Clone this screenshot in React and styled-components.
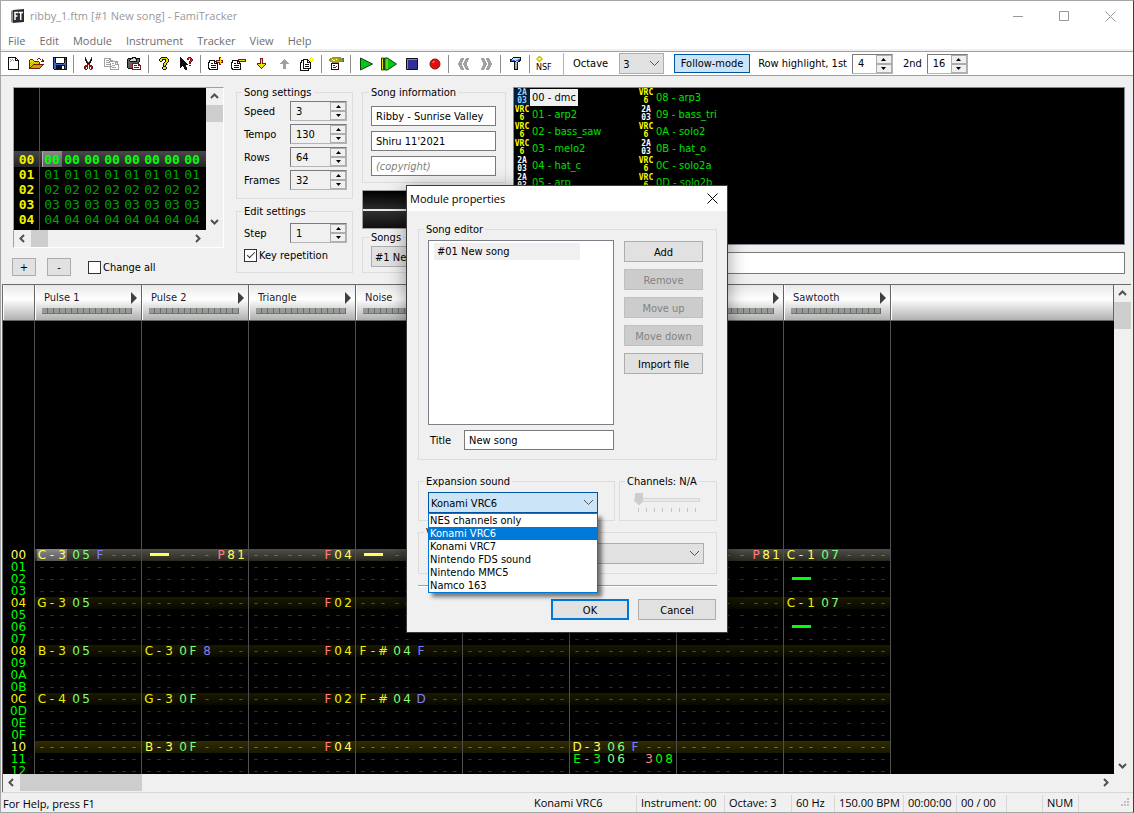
import React from "react";
import styled, { createGlobalStyle } from "styled-components";

const UI_FONT = `"DejaVu Sans Condensed", "DejaVu Sans", sans-serif`;
const SYS_FONT = `"Open Sans", "Noto Sans", sans-serif`;

const GlobalStyle = createGlobalStyle`
  *, *::before, *::after { box-sizing: border-box; }
  body {
    margin: 0;
    overflow: hidden;
    background: #f0f0f0;
  }
  button, input, select {
    font: inherit;
    color: inherit;
    margin: 0;
    padding: 0;
    border-radius: 0;
  }
`;

const Window = styled.div`
  position: relative;
  display: flex;
  flex-direction: column;
  height: 100vh;
  background: #f0f0f0;
  border: 1px solid #a6a6a6;
  border-right-color: #3c3c48;
  font: 11px/13px ${UI_FONT};
  color: #000;
  white-space: nowrap;
`;

/* ---------- title and menu ---------- */

const TitleBar = styled.header`
  display: flex;
  align-items: center;
  height: 30px;
  padding: 0 11px 0 9px;
  background: #fff;
  font: 11px/16px ${SYS_FONT};
  color: #999;
  flex: none;
`;

const TitleText = styled.h1`
  margin: 0 auto 0 4px;
  font: inherit;
`;

const CaptionButton = styled.button`
  width: 46px;
  height: 28px;
  border: 0;
  background: none;
  display: flex;
  align-items: center;
  justify-content: center;

  &:last-child { width: 24px; margin-left: 11px; }
`;

const MenuBar = styled.nav`
  display: flex;
  gap: 14px;
  height: 20px;
  padding: 1px 7px 0;
  background: #fff;
  border-bottom: 2px solid #f0f0f0;
  font: 11px/17px ${SYS_FONT};
  flex: none;
`;

const MenuItem = styled.button`
  border: 0;
  background: none;
  color: #6d6d6d;
`;

/* ---------- toolbar ---------- */

const ToolBar = styled.div`
  display: flex;
  align-items: center;
  height: 25px;
  padding-left: 1px;
  background: #fff;
  border-top: 1px solid #a0a0a0;
  border-bottom: 1px solid #a0a0a0;
  flex: none;
`;

const ToolButton = styled.button`
  width: 23px;
  height: 22px;
  border: 0;
  background: none;
  display: flex;
  align-items: center;
  justify-content: center;
`;

const Divider = styled.span`
  width: 1px;
  height: 18px;
  margin: 0 3px 0 2px;
  background: #8c8c8c;
`;

const BandEdge = styled.span`
  width: 1px;
  height: 22px;
  margin: 0 9px 0 7px;
  background: #b4b4b4;
`;

const BandLabel = styled.label`
  margin-right: 5px;
`;

const SecondLabel = styled(BandLabel)`
  margin-left: 10px;
`;

const OctaveLabel = styled(BandLabel)`
  margin-right: 11px;
`;

const FollowButton = styled.button`
  height: 19px;
  width: 76px;
  margin: 0 8px 0 10px;
  background: #cce4f7;
  border: 1px solid #0054a0;
`;

/* ---------- shared controls ---------- */

const SelectWrap = styled.span`
  position: relative;
  display: inline-flex;
  width: ${p => p.$width};

  svg {
    position: absolute;
    right: 4px;
    top: 7px;
    pointer-events: none;
  }
`;

const SelectBox = styled.select`
  appearance: none;
  width: 100%;
  height: 21px;
  padding: 1px ${p => (p.$wide ? 2 : 3)}px 0;
  background: ${p => (p.$open ? "#cce4f7" : "#e1e1e1")};
  border: 1px solid ${p => (p.$open ? "#0054a0" : "#adadad")};
`;

const SpinWrap = styled.span`
  display: inline-flex;
  width: ${p => p.$width}px;
  height: 20px;
  border: 1px solid #b4b4b4;
  border-left-color: #7a7a7a;
  border-top-color: #7a7a7a;
  background: ${p => (p.$white ? "#fff" : "#f0f0f0")};

  input {
    flex: 1;
    min-width: 0;
    width: 0;
    padding-left: 5px;
    border: 0;
    background: none;
  }
`;

const SpinButtons = styled.span`
  display: flex;
  flex-direction: column;
  width: 16px;

  button {
    flex: 1;
    display: flex;
    align-items: center;
    justify-content: center;
    border: 1px solid #adadad;
    background: #f0f0f0;
    min-height: 0;
  }
`;

const TextInput = styled.input`
  height: 20px;
  width: 100%;
  padding: 0 4px;
  border: 1px solid #7a7a7a;
  background: #fff;

  &::placeholder { font-style: italic; color: #7d7d7d; opacity: 1; }
`;

const PushButton = styled.button`
  height: 21px;
  width: ${p => p.$width || "100%"};
  padding-top: 1px;
  background: #e1e1e1;
  border: ${p => (p.$default ? "2px solid #0078d7" : "1px solid #adadad")};

  &:disabled {
    background: #ccc;
    border-color: #bfbfbf;
    color: #838383;
  }
`;

const CheckLabel = styled.label`
  display: flex;
  align-items: center;
  gap: 2px;
  height: 13px;
  line-height: 15px;
`;

const CheckBox = styled.input`
  appearance: none;
  width: 13px;
  height: 13px;
  border: 1px solid #333;
  background: #fff;
  display: grid;
  place-items: center;

  &:checked::after {
    content: "";
    width: 8px;
    height: 4px;
    margin-top: -3px;
    border-left: 1px solid #333;
    border-bottom: 1px solid #333;
    transform: rotate(-45deg);
  }
`;

const Group = styled.fieldset`
  min-width: 0;
  margin: 0;
  padding: ${p => p.$pad};
  border: 1px solid #dcdcdc;

  > legend {
    margin-left: ${p => p.$outdent || -2}px;
    padding: 0 2px;
    line-height: 13px;
    height: 12px;
  }
`;

/* ---------- control panel ---------- */

const Panel = styled.section`
  display: flex;
  align-items: flex-start;
  height: 208px;
  padding: 10px 8px 0 12px;
  flex: none;
`;

const Column = styled.div`
  display: flex;
  flex-direction: column;
  gap: ${p => p.$gap || 0}px;
  width: ${p => p.$width}px;
  margin-right: ${p => p.$after}px;
  flex: none;
`;

const FrameColumn = styled(Column)`
  padding-top: 1px;
`;

const FrameBox = styled.div`
  display: grid;
  grid-template-columns: 1fr 17px;
  grid-template-rows: 142px 17px;
  border: 1px solid #fff;
  border-left-color: #a0a0a0;
  border-top-color: #a0a0a0;
`;

const FrameTable = styled.table`
  border-collapse: separate;
  border-spacing: 0;
  background: #000;
  width: 100%;
  height: 142px;
  table-layout: fixed;
  font: 13px/15px "DejaVu Sans Mono", monospace;
  color: #00a000;

  th, td { padding: 0; height: 15px; text-align: center; }
  th {
    border-right: 1px solid #505050;
    font-weight: bold;
    color: #f0f000;
  }
  tr:first-child th { height: 63px; }
  tr:last-child th { height: 3px; }
`;

const FrameCol = styled.col`
  width: ${p => p.$width}px;
`;

const ActiveFrame = styled.tr`
  background: linear-gradient(#484848, #242424);
  color: #00ff00;

  td { font-weight: bold; height: 16px; }
  td:nth-child(3) {
    background: linear-gradient(#8a8a8a, #606060);
    box-shadow: inset 1px 0 #b0b0b0;
  }
`;

const Scroll = styled.div`
  display: flex;
  flex-direction: ${p => (p.$vertical ? "column" : "row")};
  background: #f0f0f0;

  button {
    flex: none;
    width: 17px;
    height: 17px;
    border: 0;
    background: none;
    display: flex;
    align-items: center;
    justify-content: center;
  }
  button:last-child {
    ${p => (p.$vertical ? "margin-top: auto" : "margin-left: auto")};
  }
`;

const Thumb = styled.span`
  background: #cdcdcd;
  width: ${p => p.$w}px;
  height: ${p => p.$h}px;
`;

const FrameButtons = styled.div`
  display: flex;
  align-items: center;
  margin: 10px 0 0 -1px;

  button { width: 24px; height: 18px; margin-right: 11px; }
  label { margin-left: 6px; }
`;

const FieldGrid = styled.div`
  display: grid;
  grid-template-columns: 1fr 57px;
  row-gap: 3px;
  align-items: center;

  label { padding-top: 1px; }
`;

const Stack = styled.div`
  display: flex;
  flex-direction: column;
  gap: ${p => p.$gap}px;
`;

const ScopeBox = styled.div`
  height: 39px;
  margin: 7px 0 2px;
  border: 1px solid #a0a0a0;
  background: linear-gradient(#000, #2a2a2a 18px, #e8e8e8 18px, #e8e8e8 20px, #303030 20px, #101010);
`;

const InstrumentColumn = styled.div`
  flex: 1;
  min-width: 0;
  padding-top: 1px;
`;

const InstrumentList = styled.ul`
  display: grid;
  grid-auto-flow: column;
  grid-auto-columns: 124px;
  grid-template-rows: repeat(6, 17px);
  height: 158px;
  margin: 0;
  padding: 1px 0;
  list-style: none;
  background: #000;
  border: 1px solid #82879a;
  color: #00e000;
`;

const InstrumentItem = styled.li`
  display: flex;
  line-height: 16px;

  > span:last-child {
    padding: 1px 2px 0;
    ${p => p.$selected && "background: #f0f0f0; color: #000;"}
  }
`;

const Chip = styled.span`
  width: 16px;
  height: 16px;
  font: bold 8px/8px "DejaVu Sans Mono", monospace;
  text-align: center;
  white-space: pre-line;
  color: ${p => (p.$vrc ? "#ffff00" : "#ffffff")};
  ${p => p.$selected && "background: #00203c; color: #a0d0ff;"}
`;

const NameInput = styled.input`
  display: block;
  width: calc(100% - 180px);
  height: 22px;
  margin: 7px 0 0 180px;
  border: 1px solid #7a7a7a;
  background: #fff;
`;

/* ---------- pattern editor ---------- */

const EditorArea = styled.section`
  flex: 1;
  min-height: 0;
  display: grid;
  grid-template-columns: minmax(0, 1fr) 17px;
  grid-template-rows: minmax(0, 1fr) 18px;
  margin: 0 2px 0 1px;
  border-top: 1px solid #696969;
  border-left: 1px solid #696969;
`;

const PatternView = styled.div`
  overflow: hidden;
  background: #000;
`;

const PatternTable = styled.table`
  width: 100%;
  table-layout: fixed;
  border-collapse: separate;
  border-spacing: 0;
  font: 12px/12px "DejaVu Sans", sans-serif;
  color: #004d00;

  th, td { padding: 0; }
`;

const HeadCell = styled.th`
  width: ${p => p.$width};
  height: 36px;
  vertical-align: top;
  background: linear-gradient(#e8e8e8, #fff 40%, #b0b0b0);
  border-right: 1px solid #646464;
  border-bottom: 1px solid #646464;
  box-shadow: inset 1px 0 #fff;
  font: 11px/13px ${UI_FONT};
  color: #1a1a2e;
`;

const HeadName = styled.div`
  display: flex;
  align-items: center;
  justify-content: space-between;
  height: 13px;
  margin: 6px 4px 0 9px;
`;

const Meter = styled.div`
  display: grid;
  grid-template-columns: repeat(15, 5px);
  gap: 1px;
  margin: 4px 0 0 7px;

  i {
    height: 6px;
    background: #969b96;
    border-bottom: 1px solid #747874;
    box-shadow: 1px 0 #6a6e6a;
  }
`;

const LeadRow = styled.tr`
  height: ${p => p.$height}px;
`;

const rowTone = {
  cursor: { bg: "linear-gradient(#50504a, #2a2a20)", dash: "#77772c", text: "#ffff60" },
  second: { bg: "linear-gradient(#302c00, #1a1800)", dash: "#77772c", text: "#ffff60" },
  first: { bg: "linear-gradient(#1c1900, #0a0900)", dash: "#5f5a00", text: "#f0f000" },
  plain: { bg: "none", dash: "#005800", text: "#00ff00" },
};

const RowNumber = styled.th`
  height: 12px;
  border-right: 1px solid #505050;
  font-weight: normal;
  font-size: 12px;
  line-height: 12px;
  color: ${p => rowTone[p.$tone].text};
`;

const ChannelCell = styled.td`
  height: 12px;
  border-right: 1px solid #505050;
  background: ${p => rowTone[p.$tone].bg};
  color: ${p => rowTone[p.$tone].text};
`;

const Slots = styled.div`
  display: flex;
  gap: 4px;
  height: 12px;
  padding-left: 2px;
`;

const Slot = styled.span`
  display: grid;
  grid-template-columns: repeat(${p => p.$n}, 10px);
  text-align: center;
  line-height: 12px;
  color: ${p => p.$color};
  ${p => p.$cursor && "background: linear-gradient(#8a8a8a, #585860);"}

  b { font-weight: normal; color: #ff8080; }
`;

const Halt = styled.span`
  grid-column: 1 / -1;
  width: 19px;
  height: 3px;
  margin: 4px auto 0;
  background: currentColor;
`;

/* ---------- status bar ---------- */

const StatusBar = styled.footer`
  display: flex;
  align-items: center;
  height: 20px;
  padding-top: 2px;
  border-top: 1px solid #d7d7d7;
  font: 11px/16px ${SYS_FONT};
  flex: none;

  > span:first-child { margin: 0 auto 0 2px; }
`;

const Pane = styled.span`
  width: ${p => p.$width}px;
  height: 17px;
  padding-left: 4px;
  border-left: 1px solid ${p => (p.$first ? "transparent" : "#d7d7d7")};
`;

/* ---------- dialog ---------- */

const Dialog = styled.div`
  position: absolute;
  top: 184px;
  left: calc(50% - 161px);
  width: 322px;
  height: 448px;
  display: flex;
  flex-direction: column;
  background: #f0f0f0;
  border: 1px solid #3c3c3c;
  box-shadow: 0 4px 18px rgba(0, 0, 0, 0.4);
`;

const DialogTitle = styled.div`
  display: flex;
  align-items: center;
  justify-content: space-between;
  height: 25px;
  padding: 0 9px 0 3px;
  background: #fff;
  font: 11px/16px ${SYS_FONT};

  h2 { margin: 0; font: inherit; }
  button { display: flex; border: 0; background: none; }
`;

const DialogBody = styled.form`
  display: flex;
  flex-direction: column;
  padding: 12px 10px 0 11px;
`;

const EditorGrid = styled.div`
  display: grid;
  grid-template-columns: 186px 79px;
  column-gap: 10px;
`;

const SongList = styled.ul`
  height: 185px;
  margin: 0;
  padding: 2px 5px;
  list-style: none;
  background: #fff;
  border: 1px solid #7a7f88;

  li {
    width: 146px;
    padding-left: 3px;
    line-height: 17px;
    background: #f0f0f0;
  }
`;

const SideButtons = styled(Stack)`
  padding-top: 1px;
`;

const TitleField = styled.div`
  display: grid;
  grid-template-columns: 34px 150px;
  align-items: center;
  margin-top: 5px;
  padding-left: 2px;
`;

const TwoGroups = styled.div`
  display: grid;
  grid-template-columns: 197px 98px;
  gap: 4px;
  margin: 15px 0 5px;
`;

const Options = styled.ul`
  position: absolute;
  top: 21px;
  left: 0;
  z-index: 1;
  width: 100%;
  margin: 0;
  padding: 0;
  list-style: none;
  background: #fff;
  border: 1px solid #0078d7;
  box-shadow: 4px 4px 4px rgba(0, 0, 0, 0.5);

  li {
    height: 13px;
    padding-left: 1px;
  }
  li[aria-selected="true"] {
    background: #0078d7;
    color: #fff;
  }
`;

const Slider = styled.input`
  appearance: none;
  display: block;
  width: 66px;
  height: 13px;
  background: none;

  &::-webkit-slider-runnable-track {
    height: 4px;
    border: 1px solid #d6d6d6;
    background: #e7eaea;
  }
  &::-webkit-slider-thumb {
    appearance: none;
    width: 8px;
    height: 13px;
    margin-top: -6px;
    background: #ccc;
    clip-path: polygon(0 0, 100% 0, 100% 70%, 50% 100%, 0 70%);
  }
`;

const Ticks = styled.div`
  display: flex;
  justify-content: space-between;
  width: 58px;
  margin: 2px 0 0 4px;

  i { width: 1px; height: 4px; background: #c4c4c4; }
`;

const Rule = styled.hr`
  width: 100%;
  margin: 11px 0 12px;
  border: 0;
  border-top: 1px solid #a0a0a0;
  border-bottom: 1px solid #fff;
`;

const DialogButtons = styled.div`
  display: flex;
  justify-content: flex-end;
  gap: 9px;
  padding-right: 1px;
`;

/* ---------- icons ---------- */

const palette = {
  k: "#101010", w: "#ffffff", r: "#7a1414", R: "#d02020", y: "#f0e000", d: "#b8a800",
  b: "#3a6ac8", n: "#303090", s: "#a0a0a0", g: "#606060", c: "#b8e0f0", l: "#d8d8d0",
  o: "#909048",
};

function Pixels({ rows }) {
  const rects = [];
  rows.forEach((row, y) => {
    [...row].forEach((ch, x) => {
      if (palette[ch]) rects.push(<rect key={x + "-" + y} x={x} y={y} width="1" height="1" fill={palette[ch]} />);
    });
  });
  const w = Math.max(...rows.map(r => r.length));
  return (
    <svg width={w} height={rows.length} viewBox={`0 0 ${w} ${rows.length}`} shapeRendering="crispEdges" aria-hidden="true">
      {rects}
    </svg>
  );
}

const art = {
  newFile: [
    "kkkkkkkk...", "kwwwwwwkk..", "kwdwdwwkwk.", "kwwdwdwkkkk", "kwdwwwwwwwk", "kwwwwwwwwwk", "kwwwwwwwwwk",
    "kwwwwwwwwwk", "kwwwwwwwwwk", "kwwwwwwwwwk", "kwwwwwwwwwk", "kwwwwwwwwwk", "kkkkkkkkkkk",
  ],
  open: [
    ".........rr....", ".rrr....r..r.r.", "ryyyr........rr", "ryyyyrrrrr..rrr", "rydydydydyr....", "rdydydydydr....",
    "rydyrrrrrrrrrrr", "rdyrdddddddddr.", "ryrdddddddddr..", "rrdddddddddr...", "rrrrrrrrrrr....",
  ],
  save: [
    "kkkkkkkkkkkkkk", "kbkwwwwwwwwkbk", "kbkwwwwwwwwkkk", "kbkwwwwwwwwkbk", "kbkwwwwwwwwkbk", "kbkwwwwwwwwkbk",
    "kbbkkkkkkkkbbk", "kbbbbbbbbbbbbk", "kbbkkkkkkkkkbk", "kbbkkkkkkwwkbk", "kbbkkkkkkwwkbk", "kbbkkkkkkwwkbk", ".kkkkkkkkkkkkk",
  ],
  cut: [
    ".g.....g.", ".k.....k.", ".kg...gk.", ".kk...kk.", "..kg.gk..", "..kkgkk..", "...kkk...", "...rRr...",
    ".rrr.rrr.", "rRrr.rrRr", "rr.r.r.rr", "rr.r.r.rr", ".rr...rr.",
  ],
  copy: [
    "sssssss........", "swwwwss........", "swssswsss......", "swwwwsssssssss.", "swsssswwwwwsss.", "swwwwwswsswsws.",
    "swssssswwwwssss", "swwwwwswssswwws", "sssssssswwwwwws", "......swsssswws", "......swwwwwwws", "......sssssssss",
  ],
  paste: [
    ".....kkkk......", ".kkkkkllkkkkk..", "kggklllllkggk..", "kgkllllllkggk..", "kggkkkkkkkggk..", "kggggggggggk...",
    "kggggrrrrrrr...", "kggggrwwwwwrr..", "kggggrwrrrwrrr.", "kggggrwwwwwwwr.", "kggggrwrrrrrwr.", ".kkkkrwwwwwwwr.",
    ".....rrrrrrrrr.",
  ],
  help: [
    "..kkkkkk..", ".kyyyyyyk.", "kyykkkkyyk", "kyyk..kyyk", ".kk...kyyk", ".....kyyk.", "....kyyk..", "....kyyk..",
    "....kyk...", "....kkk...", "...kyyyk..", "...kyyyk..", "....kkk...",
  ],
  context: [
    "k.......rrr...", "kk.....rRdRr..", "kkk....rr.rRr.", "kkkk......rRr.", "kkkkk....rRr..", "kkkkkk...rr...",
    "kkkkkkk..rr...", "kkkkkkkk......", "kkkkkk...rr...", "kk.kkk........", "k...kkk.......", "....kkk.......", ".....kk.......",
  ],
  addFrame: [
    "...........rr..", "...........ry..", "...........ry..", ".kkkkkk.rrrryrr", ".kwwwwkkryyyyyr", "kkwwwwkwkrrryrr",
    "kwwkkwkkkk.ry..", "kwwwwwwwwk.rr..", "kwwkkkkkwk.....", "kwwwwwwwwk.....", "kwwkkkkkwk.....", "kkwwwwwwwk.....",
    ".kkkkkkkkk.....",
  ],
  removeFrame: [
    "...............", "...............", ".......rrrrrrrr", ".kkkkkkryyyyyyr", ".kwwwwkkrrrrrrr", "kkwwwwkwk......",
    "kwwkkwkkkk.....", "kwwwwwwwwk.....", "kwwkkkkkwk.....", "kwwwwwwwwk.....", "kwwkkkkkwk.....", "kkwwwwwwwk.....", ".kkkkkkkkk.....",
  ],
  down: ["...rrr...", "...ryr...", "...ryr...", "...ryr...", "...ryr...", "rrrryrrrr", "ryyyyyyyr", ".ryyyyyr.", "..ryyyr..", "...ryr...", "....r...."],
  up: ["....s....", "...sss...", "..sssss..", ".sssssss.", "sssssssss", "...sss...", "...sss...", "...sss...", "...sss...", "...sss..."],
  duplicate: [
    "...........y...", "..........y.y..", "...kkkkk.y...y.", ".kkkwwwkk.y.y..", ".kwkwwwkwk.y...", "kkwkwwwkkkk....",
    "kwwkwwwwwwk....", "kwwkwkkkkwk....", "kwwkwwwwwwk....", "kwwkwkkkkwk....", "kwwkwwwwwwk....", "kwwkkkkkkkk....",
    "kwwwwwwwk......", "kkkkkkkkk......",
  ],
  properties: [
    "...ooooooooo.ww", ".ooddddddoooogg", "oodwdddwddoooog", "ooddwwddddoooog", ".oddooddddooogg", "...ooooooo...w.",
    "..kkkkkkkk.....", "..kwwwwwwk.....", "..kwrrwwwk.....", "..kwwwwrwk.....", "..kwrrrwwk.....", "..kwwwwwwk.....",
    "..kkkkkkkk.....",
  ],
  prev: [
    "...sss..sss", "..ssss.ssss", "..sss..sss.", ".ssss.ssss.", ".sss..sss..", "ssss.ssss..", "ssss.ssss..",
    ".sss..sss..", ".ssss.ssss.", "..sss..sss.", "..ssss.ssss", "...sss..sss",
  ],
  next: [
    "sss..sss...", "ssss.ssss..", ".sss..sss..", ".ssss.ssss.", "..sss..sss.", "..ssss.ssss", "..ssss.ssss",
    "..sss..sss.", ".ssss.ssss.", ".sss..sss..", "ssss.ssss..", "sss..sss...",
  ],
  hammer: [
    "...kkkkkkkk", "..kcccccclk", "kkccccccbbk", "kbbbbcbbbkk", "kkkkkkllkk.", "....kssk...", "....kslk...",
    "....kssk...", "....kslk...", "....kssk...", "....kssk...", "....kssk...", "....kkkk...",
  ],
};

const Chevron = () => (
  <svg width="11" height="7" viewBox="0 0 11 7" fill="none" stroke="#555" aria-hidden="true">
    <path d="M1 1l4.500 4.500L10 1" />
  </svg>
);

const turn = { up: 0, right: 90, down: 180, left: 270 };

const ScrollArrow = ({ dir }) => (
  <svg width="9" height="9" viewBox="0 0 9 9" fill="none" stroke="#505050" strokeWidth="2" aria-hidden="true">
    <path d="M1 6l3.500-3.500L8 6" transform={`rotate(${turn[dir]} 4.500 4.500)`} />
  </svg>
);

const Play = ({ bar }) => (
  <svg width="16" height="14" viewBox="0 0 16 14" aria-hidden="true">
    {bar && <path d="M.5 1v12h2V1z" fill="#e8e000" stroke="#104010" />}
    <path d={bar ? "M3.500 1v12h3l9-6-9-6z" : "M2.500 1v12l12-6z"} fill="#00c818" stroke="#104010" />
    {bar && <path d="M6 2v10" stroke="#d8e800" />}
  </svg>
);

const Stop = () => (
  <svg width="12" height="12" viewBox="0 0 12 12" aria-hidden="true">
    <path d="M.5 .5h11v11H.5z" fill="#303098" stroke="#101010" />
    <path d="M1.500 11V1.500H11" fill="none" stroke="#8080d0" />
  </svg>
);

const Record = () => (
  <svg width="12" height="12" viewBox="0 0 12 12" aria-hidden="true">
    <circle cx="6" cy="6" r="5" fill="#e01010" stroke="#801010" />
    <path d="M3.500 5l2-2" stroke="#ffb0b0" />
  </svg>
);

const NsfIcon = () => (
  <svg width="17" height="15" viewBox="0 0 17 15" aria-hidden="true">
    <path d="M3.500 .5l2.500 2.500-2.500 2.500L1 3z" fill="#fff" stroke="#d0c000" strokeWidth="1.500" />
    <text x="0" y="14" fontSize="8" fontFamily="DejaVu Sans" fill="#000">NSF</text>
  </svg>
);

const Logo = () => (
  <svg width="16" height="16" viewBox="0 0 16 16" aria-hidden="true">
    <path d="M3 2l11-1v13l-11 1z" fill="#2c2c2c" />
    <path d="M1 3l2-1v13l-2-1z" fill="#909090" />
    <path d="M5 12V4.500h3M5 8h2.500M8.500 4.500H13M10.700 4.500V12" fill="none" stroke="#fff" strokeWidth="1.500" />
  </svg>
);

const Cross = ({ size, color }) => (
  <svg width={size} height={size} viewBox="0 0 11 11" stroke={color} aria-hidden="true">
    <path d="M.5 .5l10 10M10.500 .5l-10 10" />
  </svg>
);

/* ---------- data ---------- */

const tools = [
  [["New", art.newFile], ["Open", art.open], ["Save", art.save]],
  [["Cut", art.cut], ["Copy", art.copy], ["Paste", art.paste]],
  [["About", art.help], ["Context help", art.context]],
  [["Add frame", art.addFrame], ["Remove frame", art.removeFrame], ["Move frame down", art.down], ["Move frame up", art.up], ["Duplicate frame", art.duplicate]],
  [["Module properties", art.properties]],
  [["Play", null, <Play />], ["Play pattern", null, <Play bar />], ["Stop", null, <Stop />], ["Edit mode", null, <Record />]],
  [["Previous song", art.prev], ["Next song", art.next]],
  [["Settings", art.hammer]],
  [["Create NSF", null, <NsfIcon />]],
];

const instruments = [
  ["00", "dmc"], ["01", "arp2", 1], ["02", "bass_saw", 1], ["03", "melo2", 1], ["04", "hat_c"], ["05", "arp"],
  ["08", "arp3", 1], ["09", "bass_tri"], ["0A", "solo2", 1], ["0B", "hat_o"], ["0C", "solo2a", 1], ["0D", "solo2b", 1],
];

const channels = ["Pulse 1", "Pulse 2", "Triangle", "Noise", "DPCM", "Pulse 1", "Pulse 2", "Sawtooth"];

// row -> channel -> [note, instrument, volume, effect]
const pattern = {
  0: { 0: ["C-3", "05", "F"], 1: ["halt", "", "", "P81"], 2: ["", "", "", "F04"], 3: ["halt"], 6: ["", "", "", "P81"], 7: ["C-1", "07"] },
  2: { 7: ["halt"] },
  4: { 0: ["G-3", "05"], 2: ["", "", "", "F02"], 7: ["C-1", "07"] },
  6: { 7: ["halt"] },
  8: { 0: ["B-3", "05"], 1: ["C-3", "0F", "8"], 2: ["", "", "", "F04"], 3: ["F-#", "04", "F"] },
  12: { 0: ["C-4", "05"], 1: ["G-3", "0F"], 2: ["", "", "", "F02"], 3: ["F-#", "04", "D"] },
  16: { 1: ["B-3", "0F"], 2: ["", "", "", "F04"], 5: ["D-3", "06", "F"] },
  17: { 5: ["E-3", "06", "", "308"] },
};

const hex = n => n.toString(16).toUpperCase().padStart(2, "0");

function toneOf(row) {
  if (row === 0) return "cursor";
  if (row % 16 === 0) return "second";
  return row % 4 === 0 ? "first" : "plain";
}

/* ---------- parts ---------- */

function Spin({ id, value, width = 57, white }) {
  return (
    <SpinWrap $width={width} $white={white}>
      <input id={id} type="text" defaultValue={value} />
      <SpinButtons>
        <button type="button" aria-label="Increase"><svg width="5" height="3"><path d="M0 3l2.500-3L5 3z" /></svg></button>
        <button type="button" aria-label="Decrease"><svg width="5" height="3"><path d="M0 0l2.500 3L5 0z" /></svg></button>
      </SpinButtons>
    </SpinWrap>
  );
}

function SpinField({ label, value }) {
  const id = label.toLowerCase();
  return (
    <>
      <label htmlFor={id}>{label}</label>
      <Spin id={id} value={value} />
    </>
  );
}

function ScrollBar({ vertical, w, h }) {
  return (
    <Scroll $vertical={vertical}>
      <button type="button" aria-label="Scroll back"><ScrollArrow dir={vertical ? "up" : "left"} /></button>
      <Thumb $w={w} $h={h} />
      <button type="button" aria-label="Scroll forward"><ScrollArrow dir={vertical ? "down" : "right"} /></button>
    </Scroll>
  );
}

function SlotGroup({ value, n, tone, color, cursor, effect }) {
  if (value === "halt") {
    return <Slot $n={n} $color={rowTone[tone].text}><Halt /></Slot>;
  }
  return (
    <Slot $n={n} $color={value ? color || rowTone[tone].text : rowTone[tone].dash} $cursor={cursor}>
      {[...(value || "-".repeat(n))].map((ch, i) =>
        effect && value && i === 0 ? <b key={i}>{ch}</b> : <span key={i}>{ch}</span>
      )}
    </Slot>
  );
}

function Channel({ data = [], tone, cursor }) {
  return (
    <ChannelCell $tone={tone}>
      <Slots>
        <SlotGroup value={data[0]} n={3} tone={tone} cursor={cursor} />
        <SlotGroup value={data[1]} n={2} tone={tone} color="#80ff80" />
        <SlotGroup value={data[2]} n={1} tone={tone} color="#8080ff" />
        <SlotGroup value={data[3]} n={3} tone={tone} effect />
      </Slots>
    </ChannelCell>
  );
}

function FrameRow({ n, as: Row = "tr" }) {
  return (
    <Row>
      <th>{hex(n)}</th>
      <td />
      {channels.map((c, i) => <td key={i}>{hex(n)}</td>)}
      <td />
    </Row>
  );
}

function FrameEditor() {
  return (
    <FrameBox>
      <FrameTable>
        <colgroup>
          <FrameCol $width={26} />
          <FrameCol $width={2} />
          {channels.map((c, i) => <FrameCol key={i} $width={20} />)}
          <col />
        </colgroup>
        <tbody>
          <tr><th /><td colSpan={10} /></tr>
          <FrameRow n={0} as={ActiveFrame} />
          {[1, 2, 3, 4].map(n => <FrameRow key={n} n={n} />)}
          <tr><th /></tr>
        </tbody>
      </FrameTable>
      <ScrollBar vertical w={17} h={17} />
      <ScrollBar w={17} h={17} />
    </FrameBox>
  );
}

function PatternEditor() {
  return (
    <EditorArea>
      <PatternView>
        <PatternTable>
          <thead>
            <tr>
              <HeadCell $width="32px" />
              {channels.map((name, i) => (
                <HeadCell key={i} $width="107px">
                  <HeadName>
                    {name}
                    <svg width="6" height="12" aria-hidden="true"><path d="M0 0l6 6-6 6z" fill="#404040" /></svg>
                  </HeadName>
                  <Meter>{Array.from({ length: 15 }, (_, k) => <i key={k} />)}</Meter>
                </HeadCell>
              ))}
              <HeadCell />
            </tr>
          </thead>
          <tbody>
            <LeadRow $height={228}>
              <RowNumber $tone="plain" />
              {channels.map((c, i) => <ChannelCell key={i} $tone="plain" />)}
              <td />
            </LeadRow>
            {Array.from({ length: 19 }, (_, r) => (
              <tr key={r}>
                <RowNumber $tone={toneOf(r)}>{hex(r)}</RowNumber>
                {channels.map((c, i) => (
                  <Channel key={i} tone={toneOf(r)} data={pattern[r]?.[i]} cursor={r === 0 && i === 0} />
                ))}
                <td />
              </tr>
            ))}
          </tbody>
        </PatternTable>
      </PatternView>
      <ScrollBar vertical w={17} h={27} />
      <ScrollBar w={122} h={17} />
    </EditorArea>
  );
}

function ModuleProperties() {
  const chips = ["NES channels only", "Konami VRC6", "Konami VRC7", "Nintendo FDS sound", "Nintendo MMC5", "Namco 163"];
  return (
    <Dialog role="dialog" aria-labelledby="dialog-title">
      <DialogTitle>
        <h2 id="dialog-title">Module properties</h2>
        <button type="button" aria-label="Close"><Cross size={11} color="#000" /></button>
      </DialogTitle>
      <DialogBody>
        <Group $pad="5px 0 9px 9px" $outdent={-4}>
          <legend>Song editor</legend>
          <EditorGrid>
            <div>
              <SongList><li>#01 New song</li></SongList>
              <TitleField>
                <label htmlFor="title">Title</label>
                <TextInput id="title" defaultValue="New song" />
              </TitleField>
            </div>
            <SideButtons $gap={7}>
              <PushButton type="button">Add</PushButton>
              <PushButton type="button" disabled>Remove</PushButton>
              <PushButton type="button" disabled>Move up</PushButton>
              <PushButton type="button" disabled>Move down</PushButton>
              <PushButton type="button">Import file</PushButton>
            </SideButtons>
          </EditorGrid>
        </Group>
        <TwoGroups>
          <Group $pad="5px 0 7px 9px" $outdent={-4}>
            <legend><label htmlFor="expansion">Expansion sound</label></legend>
            <SelectWrap $width="170px">
              <SelectBox id="expansion" $open $wide defaultValue="Konami VRC6">
                {chips.map(c => <option key={c}>{c}</option>)}
              </SelectBox>
              <Chevron />
              <Options role="listbox">
                {chips.map(c => <li key={c} role="option" aria-selected={c === "Konami VRC6"}>{c}</li>)}
              </Options>
            </SelectWrap>
          </Group>
          <Group $pad="6px 0 7px 14px" $outdent={-9}>
            <legend><label htmlFor="count">Channels: N/A</label></legend>
            <Slider id="count" type="range" min="1" max="8" defaultValue="1" disabled />
            <Ticks>{Array.from({ length: 8 }, (_, i) => <i key={i} />)}</Ticks>
          </Group>
        </TwoGroups>
        <Group $pad="5px 0 9px 9px" $outdent={-4}>
          <legend><label htmlFor="vibrato">Vibrato</label></legend>
          <SelectWrap $width="276px">
            <SelectBox id="vibrato"><option>New style</option></SelectBox>
            <Chevron />
          </SelectWrap>
        </Group>
        <Rule />
        <DialogButtons>
          <PushButton type="submit" $width="78px" $default>OK</PushButton>
          <PushButton type="button" $width="78px">Cancel</PushButton>
        </DialogButtons>
      </DialogBody>
    </Dialog>
  );
}

export default function App() {
  return (
    <Window>
      <GlobalStyle />
      <TitleBar>
        <Logo />
        <TitleText>ribby_1.ftm [#1 New song] - FamiTracker</TitleText>
        <CaptionButton aria-label="Minimize"><svg width="10" height="1"><path d="M0 0h10v1H0z" fill="#999" /></svg></CaptionButton>
        <CaptionButton aria-label="Maximize"><svg width="10" height="10"><path d="M.5 .5h9v9h-9z" fill="none" stroke="#999" /></svg></CaptionButton>
        <CaptionButton aria-label="Close"><Cross size={11} color="#999" /></CaptionButton>
      </TitleBar>
      <MenuBar>
        {["File", "Edit", "Module", "Instrument", "Tracker", "View", "Help"].map(m => <MenuItem key={m}>{m}</MenuItem>)}
      </MenuBar>
      <ToolBar>
        {tools.map((group, g) => (
          <React.Fragment key={g}>
            {g > 0 && <Divider />}
            {group.map(([name, rows, icon]) => (
              <ToolButton key={name} aria-label={name}>{rows ? <Pixels rows={rows} /> : icon}</ToolButton>
            ))}
          </React.Fragment>
        ))}
        <BandEdge />
        <OctaveLabel htmlFor="octave">Octave</OctaveLabel>
        <SelectWrap $width="45px">
          <SelectBox id="octave"><option>3</option></SelectBox>
          <Chevron />
        </SelectWrap>
        <FollowButton>Follow-mode</FollowButton>
        <BandLabel htmlFor="hl1">Row highlight, 1st</BandLabel>
        <Spin id="hl1" value="4" width={41} white />
        <SecondLabel htmlFor="hl2">2nd</SecondLabel>
        <Spin id="hl2" value="16" width={41} white />
      </ToolBar>

      <Panel>
        <FrameColumn $width={211} $after={12}>
          <FrameEditor />
          <FrameButtons>
            <PushButton>+</PushButton>
            <PushButton>-</PushButton>
            <CheckLabel><CheckBox type="checkbox" />Change all</CheckLabel>
          </FrameButtons>
        </FrameColumn>

        <Column $width={117} $after={9} $gap={6}>
          <Group $pad="3px 5px 8px 7px">
            <legend>Song settings</legend>
            <FieldGrid>
              <SpinField label="Speed" value="3" />
              <SpinField label="Tempo" value="130" />
              <SpinField label="Rows" value="64" />
              <SpinField label="Frames" value="32" />
            </FieldGrid>
          </Group>
          <Group $pad="6px 5px 10px 7px">
            <legend>Edit settings</legend>
            <Stack $gap={6}>
              <FieldGrid><SpinField label="Step" value="1" /></FieldGrid>
              <CheckLabel><CheckBox type="checkbox" defaultChecked />Key repetition</CheckLabel>
            </Stack>
          </Group>
        </Column>

        <Column $width={144} $after={7}>
          <Group $pad="8px 9px 6px 8px">
            <legend>Song information</legend>
            <Stack $gap={5}>
              <TextInput aria-label="Song title" defaultValue="Ribby - Sunrise Valley" />
              <TextInput aria-label="Author" defaultValue="Shiru 11'2021" />
              <TextInput aria-label="Copyright" placeholder="(copyright)" />
            </Stack>
          </Group>
          <ScopeBox />
          <Group $pad="3px 8px 5px 8px">
            <legend><label htmlFor="songs">Songs</label></legend>
            <SelectWrap $width="100%">
              <SelectBox id="songs"><option>#1 New song</option></SelectBox>
              <Chevron />
            </SelectWrap>
          </Group>
        </Column>

        <InstrumentColumn>
          <InstrumentList>
            {instruments.map(([no, name, vrc], i) => (
              <InstrumentItem key={no} $selected={i === 0}>
                <Chip $vrc={vrc} $selected={i === 0}>{vrc ? "VRC\n6" : "2A\n03"}</Chip>
                <span>{no} - {name}</span>
              </InstrumentItem>
            ))}
          </InstrumentList>
          <NameInput aria-label="Instrument name" />
        </InstrumentColumn>
      </Panel>

      <PatternEditor />

      <StatusBar>
        <span>For Help, press F1</span>
        <Pane $width={107} $first>Konami VRC6</Pane>
        <Pane $width={88}>Instrument: 00</Pane>
        <Pane $width={67}>Octave: 3</Pane>
        <Pane $width={43}>60 Hz</Pane>
        <Pane $width={69}>150.00 BPM</Pane>
        <Pane $width={53}>00:00:00</Pane>
        <Pane $width={50}>00 / 00</Pane>
        <Pane $width={36} />
        <Pane $width={36}>NUM</Pane>
        <Pane $width={41} />
        <svg width="14" height="12" aria-hidden="true" fill="#bfbfbf">
          <path d="M8 0h2v2H8zM8 3h2v2H8zM5 3h2v2H5zM8 6h2v2H8zM5 6h2v2H5zM2 6h2v2H2z" />
        </svg>
      </StatusBar>

      <ModuleProperties />
    </Window>
  );
}
